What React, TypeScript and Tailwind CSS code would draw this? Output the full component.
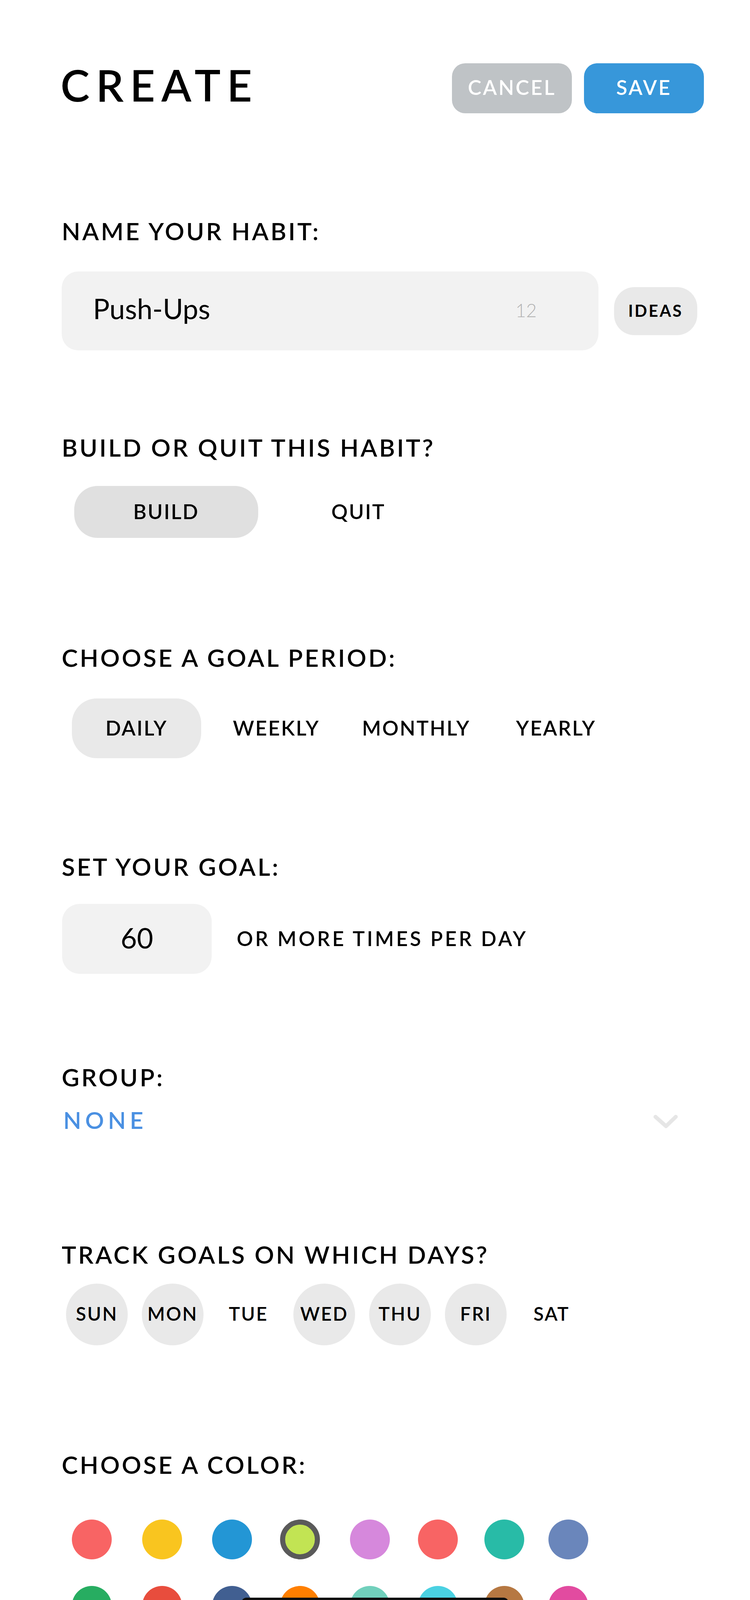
import React from "react";

const label = "text-[62px] leading-none font-semibold tracking-[5px] text-black whitespace-nowrap";

const days = [
  { d: "SUN", on: true },
  { d: "MON", on: true },
  { d: "TUE", on: false },
  { d: "WED", on: true },
  { d: "THU", on: true },
  { d: "FRI", on: true },
  { d: "SAT", on: false },
];

const row1 = [
  { c: "bg-[#f86464]", m: "ml-0" },
  { c: "bg-[#f9c51f]", m: "ml-[78px]" },
  { c: "bg-[#2396d5]", m: "ml-[77px]" },
  { c: "bg-[#c2e453] border-[13px] border-[#5a5a5a]", m: "ml-[72px]" },
  { c: "bg-[#d688dc]", m: "ml-[77px]" },
  { c: "bg-[#f86464]", m: "ml-[72px]" },
  { c: "bg-[#28bba7]", m: "ml-[68px]" },
  { c: "bg-[#6a86bb]", m: "ml-[62px]" },
];

const row2 = [
  { c: "bg-[#27ad61]", m: "ml-0" },
  { c: "bg-[#e84d3d]", m: "ml-[78px]" },
  { c: "bg-[#415f91]", m: "ml-[77px]" },
  { c: "bg-[#ff7f00]", m: "ml-[72px]" },
  { c: "bg-[#71d0bc]", m: "ml-[77px]" },
  { c: "bg-[#4ad1e2]", m: "ml-[72px]" },
  { c: "bg-[#b67842]", m: "ml-[68px]" },
  { c: "bg-[#e24ba0]", m: "ml-[62px]" },
];

export default function App() {
  return (
    <div className="relative h-[4157px] w-full overflow-hidden bg-white font-['Lato',sans-serif] text-black">
      <div className="flex flex-col pl-[158px]">
        {/* Header */}
        <div className="mt-[162px] flex h-[128px] w-[1644px] items-start justify-between">
          <div className="mt-[-1px] ml-[-3px] text-[112px] leading-none font-semibold tracking-[16px]">CREATE</div>
          <div className="flex gap-[31px]">
            <button className="flex h-[128px] w-[307px] items-center justify-center rounded-[34px] bg-[#bfc3c6] pb-[6px] text-[52px] leading-none font-semibold tracking-[4px] text-white">
              CANCEL
            </button>
            <button className="flex h-[128px] w-[307px] items-center justify-center rounded-[34px] bg-[#3797da] pb-[6px] text-[52px] leading-none font-semibold tracking-[4px] text-white">
              SAVE
            </button>
          </div>
        </div>

        {/* Name */}
        <div className={`${label} mt-[270px]`}>NAME YOUR HABIT:</div>
        <div className="mt-[73px] flex items-center">
          <div className="flex h-[202px] w-[1374px] items-center justify-between rounded-[42px] bg-[#f2f2f2] pl-[80px] pr-[158px]">
            <span className="pb-[14px] text-[71px] leading-none font-normal">Push-Ups</span>
            <span className="pb-[4px] text-[47px] leading-none font-light text-[#b3b3b3]">12</span>
          </div>
          <div className="ml-[40px] flex h-[123px] w-[213px] items-center justify-center rounded-[52px] bg-[#e9e9e9] pb-[2px] text-[42px] leading-none font-bold tracking-[4px]">
            IDEAS
          </div>
        </div>

        {/* Build or quit */}
        <div className={`${label} mt-[217px]`}>BUILD OR QUIT THIS HABIT?</div>
        <div className="mt-[68px] ml-[32px] flex gap-[21px]">
          <div className="flex h-[133px] w-[471px] items-center justify-center rounded-[60px] bg-[#e0e0e0] pb-[4px] text-[52px] leading-none font-semibold tracking-[3px]">
            BUILD
          </div>
          <div className="flex h-[133px] w-[471px] items-center justify-center pb-[4px] text-[52px] leading-none font-semibold tracking-[3px]">
            QUIT
          </div>
        </div>

        {/* Goal period */}
        <div className={`${label} mt-[275px]`}>CHOOSE A GOAL PERIOD:</div>
        <div className="mt-[74px] ml-[26px] flex gap-[27px]">
          {["DAILY", "WEEKLY", "MONTHLY", "YEARLY"].map((p, i) => (
            <div
              key={p}
              className={`flex h-[153px] w-[331px] items-center justify-center rounded-[64px] pb-[4px] text-[52px] leading-none font-semibold tracking-[3px] ${
                i === 0 ? "bg-[#e9e9e9]" : ""
              }`}
            >
              {p}
            </div>
          ))}
        </div>

        {/* Goal */}
        <div className={`${label} mt-[246px]`}>SET YOUR GOAL:</div>
        <div className="mt-[65px] ml-[1px] flex items-center">
          <div className="flex h-[179px] w-[383px] items-center justify-center rounded-[45px] bg-[#f2f2f2] pb-[8px] text-[72px] leading-none font-normal">
            60
          </div>
          <div className="ml-[64px] pb-[4px] text-[52px] leading-none font-semibold tracking-[5.5px]">
            OR MORE TIMES PER DAY
          </div>
        </div>

        {/* Group */}
        <div className={`${label} mt-[233px]`}>GROUP:</div>
        <div className="mt-[49px] flex w-[1585px] items-start justify-between">
          <div className="ml-[4px] text-[60px] leading-none font-semibold tracking-[10px] text-[#4a90e2]">NONE</div>
          <svg className="mt-[9px]" width="78" height="50" viewBox="0 0 78 50" fill="none">
            <path d="M13 13 L40 37 L65 13" stroke="#e6e6e6" strokeWidth="10" strokeLinecap="round" strokeLinejoin="round" />
          </svg>
        </div>

        {/* Days */}
        <div className={`${label} mt-[283px]`}>TRACK GOALS ON WHICH DAYS?</div>
        <div className="mt-[44px] ml-[11px] flex gap-[36px]">
          {days.map((d) => (
            <div
              key={d.d}
              className={`flex h-[158px] w-[158px] items-center justify-center rounded-full pb-[4px] text-[48px] leading-none font-semibold tracking-[3px] ${
                d.on ? "bg-[#e9e9e9]" : ""
              }`}
            >
              {d.d}
            </div>
          ))}
        </div>

        {/* Colors */}
        <div className={`${label} mt-[274px]`}>CHOOSE A COLOR:</div>
        <div className="mt-[110px] ml-[26px] flex">
          {row1.map((c, i) => (
            <div key={i} className={`h-[102px] w-[102px] shrink-0 rounded-full ${c.c} ${c.m}`} />
          ))}
        </div>
        <div className="mt-[68px] ml-[26px] flex">
          {row2.map((c, i) => (
            <div key={i} className={`h-[102px] w-[102px] shrink-0 rounded-full ${c.c} ${c.m}`} />
          ))}
        </div>
      </div>

      {/* Home indicator */}
      <div className="absolute left-[618px] top-[4090px] h-[26px] w-[684px] rounded-full bg-[#0e0e0e]" />
    </div>
  );
}
